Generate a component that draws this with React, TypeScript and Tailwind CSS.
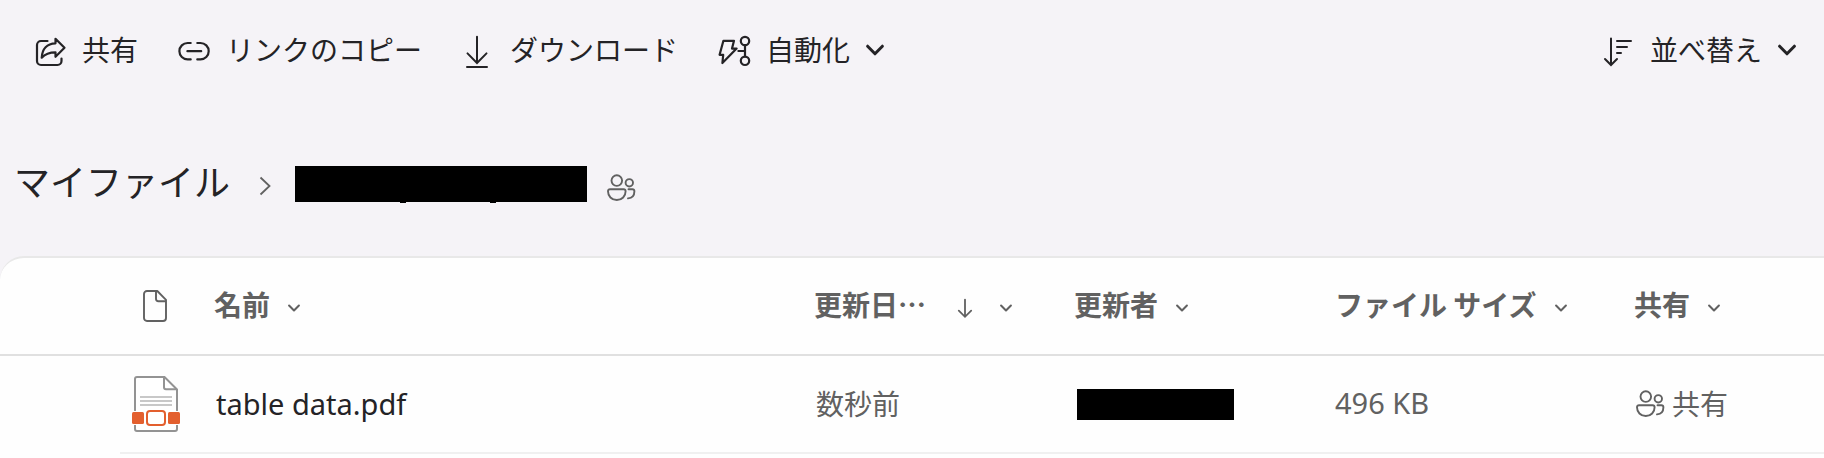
import React from 'react';

type IconProps = { className?: string };

const iconBase = 'shrink-0 overflow-visible fill-none stroke-current';

function ShareIcon() {
  return (
    <svg className={`w-8 h-8 ${iconBase}`} viewBox="0 0 32 32" strokeWidth="2.2" strokeLinecap="round" strokeLinejoin="round">
      <path d="M13.5 7H7a4 4 0 0 0-4 4v16a4 4 0 0 0 4 4h16.5a4 4 0 0 0 4-4v-2.5" />
      <path d="M21.5 4.8l9 9-9 9v-4.5c-6 0-10.5 1.8-13.8 5.4.5-8.7 5.3-14.2 13.8-14.4z" />
    </svg>
  );
}

function LinkIcon() {
  return (
    <svg className={`w-8 h-8 ${iconBase}`} viewBox="0 0 32 32" strokeWidth="2.2" strokeLinecap="round">
      <path d="M12.7 9H9.6a8.2 8.2 0 0 0 0 16.4h3.1M19.3 9h3.2a8.2 8.2 0 0 1 0 16.4h-3.2M9.4 17.2h13.8" />
    </svg>
  );
}

function DownloadIcon() {
  return (
    <svg className={`w-8 h-8 ${iconBase}`} viewBox="0 0 32 32" strokeWidth="2" strokeLinecap="round">
      <path d="M15 2.8v26M5.5 19.4l9.5 9.6 9.5-9.6M5 33h20" />
    </svg>
  );
}

function AutomateIcon() {
  return (
    <svg className={`w-8 h-8 ${iconBase}`} viewBox="0 0 32 32" strokeWidth="2.2" strokeLinejoin="round" strokeLinecap="round">
      <path d="M5.4 6.8H16l-2 7.8h4.6L4.4 29l.8-8.2H1.6z" />
      <circle cx="27" cy="7" r="4.2" />
      <circle cx="27" cy="26.8" r="4.2" />
      <path d="M27 11.4v11M20.4 17H27" />
    </svg>
  );
}

function SortIcon() {
  return (
    <svg className={`w-8 h-8 ${iconBase}`} viewBox="0 0 32 32" strokeWidth="2" strokeLinecap="round">
      <path d="M9 4.6v26M3 25l6 6 6-6M15 7h14M15 13h10M15 19h4" />
    </svg>
  );
}

function ChevronDown({ className = '' }: IconProps) {
  return (
    <svg className={`${className} ${iconBase}`} viewBox="0 0 18 12" strokeLinecap="round" strokeLinejoin="round">
      <path d="M1.6 2.2 9 9.8l7.4-7.6" />
    </svg>
  );
}

function PeopleIcon() {
  return (
    <svg className={`w-7 h-7 ${iconBase}`} viewBox="0 0 28 28" strokeWidth="1.9" strokeLinecap="round">
      <circle cx="9.8" cy="6.6" r="5.3" />
      <circle cx="22.3" cy="8.8" r="3.7" />
      <path d="M3 15.2h13.6a2 2 0 0 1 2 2c0 5-3.6 8.8-8.8 8.8S1 22.2 1 17.2a2 2 0 0 1 2-2z" />
      <path d="M21.5 15.2h3.9a2 2 0 0 1 2 2c0 4-2.4 6.8-6.4 7.2" />
    </svg>
  );
}

function FileIcon() {
  return (
    <svg className={`w-6 h-8 ${iconBase}`} viewBox="0 0 24 32" strokeWidth="1.9" strokeLinejoin="round">
      <path d="M4 1h10.3L23 9.8V28a3 3 0 0 1-3 3H4a3 3 0 0 1-3-3V4a3 3 0 0 1 3-3z" />
      <path d="M13 1v7.8a2.5 2.5 0 0 0 2.5 2.5H23" />
    </svg>
  );
}

function PdfIcon() {
  return (
    <svg className="w-12 h-14 shrink-0" viewBox="0 0 48 56" fill="none">
      <path d="M5 1h27.5L45 13.5V53a2 2 0 0 1-2 2H5a2 2 0 0 1-2-2V3a2 2 0 0 1 2-2z" fill="#fff" stroke="#939393" strokeWidth="2" />
      <path d="M32 1v10.3a2 2 0 0 0 2 2h11" stroke="#939393" strokeWidth="2" />
      <path d="M8 21h32M8 25h32M8 29h32" stroke="#c8c8c8" strokeWidth="1.8" />
      <path d="M0 35h48v14H0z" fill="#fefefe" />
      <rect x="0" y="36" width="12" height="12" rx="1.5" fill="#e35f2e" />
      <rect x="36" y="36" width="12" height="12" rx="1.5" fill="#e35f2e" />
      <rect x="15" y="35" width="18" height="14" rx="3" fill="#fff" stroke="#e35f2e" strokeWidth="2" />
    </svg>
  );
}

function ToolbarButton({ icon, label, menu }: { icon: React.ReactNode; label: string; menu?: boolean }) {
  return (
    <button type="button" className="flex items-center gap-4 whitespace-nowrap">
      {icon}
      <span className="-mt-0.5">{label}</span>
      {menu && <ChevronDown className="w-[18px] h-3 stroke-3" />}
    </button>
  );
}

function ColumnHeader({ label, sorted }: { label: string; sorted?: boolean }) {
  return (
    <th scope="col" className="h-[98px] border-b-2 border-[#e0e0e0] text-left font-bold">
      <button type="button" className="flex items-center whitespace-nowrap">
        <span className="-mt-1">{label}</span>
        {sorted && (
          <svg className={`w-[14px] h-5 ml-8 mt-1 ${iconBase}`} viewBox="0 0 14 20" strokeWidth="1.8" strokeLinecap="round">
            <path d="M7 1.6v17M.8 12.6l6.2 6.2 6.2-6.2" />
          </svg>
        )}
        <ChevronDown className={sorted ? 'w-3 h-2 ml-7 mt-1 stroke-3' : 'w-3 h-2 ml-[18px] mt-1 stroke-3'} />
      </button>
    </th>
  );
}

const cell = 'h-[98px] border-b-2 border-[#f0f0f0]';

export default function App() {
  return (
    <div
      lang="ja"
      className="min-h-screen flex flex-col bg-[#f5f3f7] text-[#242326] text-[28px] leading-[44px] font-['Noto_Sans_CJK_JP',sans-serif]"
    >
      <div className="flex items-center justify-between pl-[34px] pr-7 py-[29px]">
        <div className="flex items-center gap-10">
          <ToolbarButton icon={<ShareIcon />} label="共有" />
          <ToolbarButton icon={<LinkIcon />} label="リンクのコピー" />
          <ToolbarButton icon={<DownloadIcon />} label="ダウンロード" />
          <ToolbarButton icon={<AutomateIcon />} label="自動化" menu />
        </div>
        <ToolbarButton icon={<SortIcon />} label="並べ替え" menu />
      </div>

      <nav className="flex items-center px-3.5 pt-14 pb-12 text-4xl leading-[52px]">
        <a href="#" className="-mt-0.5 mb-0.5 whitespace-nowrap">マイファイル</a>
        <svg className={`w-3 h-5 ml-[29px] mt-2 text-[#616161] ${iconBase}`} viewBox="0 0 12 20" strokeWidth="1.8">
          <path d="M1.5 1.5 10.5 10l-9 8.5" />
        </svg>
        <svg className="w-[292px] h-9 ml-6 mt-1 shrink-0 overflow-visible" viewBox="0 0 292 36">
          <path d="M0 0h292v36H0zM105 36h6v1h-6zM195 36h6v1h-6z" fill="#000" />
        </svg>
        <span className="ml-5 mt-3 text-[#616161]">
          <PeopleIcon />
        </span>
      </nav>

      <main className="flex-1 bg-[#fefefe] border-t-2 border-[#e8e8e8] rounded-tl-3xl">
        <table className="w-full table-fixed border-separate border-spacing-0 text-[#616161]">
          <colgroup>
            <col className="w-[120px]" />
            <col className="w-[94px]" />
            <col />
            <col className="w-[260px]" />
            <col className="w-[261px]" />
            <col className="w-[299px]" />
            <col className="w-[190px]" />
          </colgroup>
          <thead>
            <tr>
              <td className="border-b-2 border-[#e0e0e0]" />
              <th scope="col" className="border-b-2 border-[#e0e0e0] pl-[23px]">
                <FileIcon />
              </th>
              <ColumnHeader label="名前" />
              <ColumnHeader label="更新日…" sorted />
              <ColumnHeader label="更新者" />
              <ColumnHeader label="ファイル サイズ" />
              <ColumnHeader label="共有" />
            </tr>
          </thead>
          <tbody>
            <tr>
              <td />
              <td className={`${cell} pl-3`}>
                <PdfIcon />
              </td>
              <td className={`${cell} pl-0.5 pb-0.5`}>
                <a href="#" className="text-[#242326] text-[29px] font-['Noto_Sans',sans-serif]">table data.pdf</a>
              </td>
              <td className={`${cell} pl-0.5 pb-0.5`}>数秒前</td>
              <td className={`${cell} pl-[3px]`}>
                <div className="w-[157px] h-[31px] bg-black" />
              </td>
              <td className={`${cell} pb-0.5 text-[29px] font-['Noto_Sans',sans-serif]`}>496 KB</td>
              <td className={`${cell} pl-0.5`}>
                <button type="button" className="flex items-center gap-2">
                  <PeopleIcon />
                  <span className="-mt-0.5">共有</span>
                </button>
              </td>
            </tr>
          </tbody>
        </table>
      </main>
    </div>
  );
}
